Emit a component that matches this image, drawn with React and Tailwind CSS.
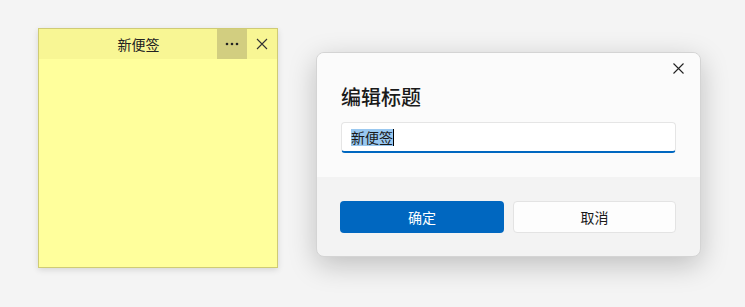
export default function App() {
  const font = { fontFamily: '"Noto Sans CJK SC", "Noto Sans", sans-serif' };
  return (
    <div className="w-[745px] h-[307px] bg-[#f4f4f4] flex items-start pl-[38px] pt-[28px] overflow-hidden" style={font}>
      <div className="w-[240px] h-[240px] border border-[#cfcb75] bg-[#ffff9c] flex flex-col shadow-[0_2px_6px_rgba(0,0,0,0.12)]">
        <div className="h-[30px] bg-[#f8f694] flex items-stretch">
          <div className="flex-1 flex items-center justify-center pl-[21px] text-[14px] text-[#222]">新便签</div>
          <div className="w-[30px] bg-[#d2ce80] flex items-center justify-center">
            <svg width="14" height="4" viewBox="0 0 14 4"><circle cx="2" cy="2" r="1.3" fill="#222"/><circle cx="7" cy="2" r="1.3" fill="#222"/><circle cx="12" cy="2" r="1.3" fill="#222"/></svg>
          </div>
          <div className="w-[30px] flex items-center justify-center">
            <svg width="12" height="12" viewBox="0 0 12 12"><path d="M1 1L11 11M11 1L1 11" stroke="#333" strokeWidth="1.1"/></svg>
          </div>
        </div>
      </div>
      <div className="ml-[38px] mt-[24px] w-[385px] h-[205px] rounded-[8px] border border-[#d4d4d4] bg-[#f3f3f3] overflow-hidden flex flex-col shadow-[0_8px_28px_rgba(0,0,0,0.22)]">
        <div className="bg-[#fbfbfb] h-[124px] flex flex-col px-[24px] relative">
          <div className="absolute right-[14px] top-[7px] w-[16px] h-[16px] flex items-center justify-center">
            <svg width="11" height="11" viewBox="0 0 11 11"><path d="M0.5 0.5L10.5 10.5M10.5 0.5L0.5 10.5" stroke="#222" strokeWidth="1.1"/></svg>
          </div>
          <div className="mt-[32px] text-[20px] font-medium leading-[24px] text-[#1a1a1a]">编辑标题</div>
          <div className="mt-[13px] h-[31px] w-[335px] rounded-[4px] bg-white border border-[#e5e5e5] border-b-2 border-b-[#0067c0] flex items-center pl-[9px]">
            <span className="text-[14px] leading-[17px] text-[#1a1a1a] bg-[#99c8f0]">新便签</span>
            <span className="w-px h-[17px] bg-black"></span>
          </div>
        </div>
        <div className="flex gap-[9px] px-[23px] pt-[24px]">
          <button className="w-[164px] h-[32px] rounded-[4px] bg-[#0067c0] text-white text-[14px]">确定</button>
          <button className="w-[163px] h-[32px] rounded-[4px] bg-[#fdfdfd] border border-[#e3e3e3] text-[#1a1a1a] text-[14px]">取消</button>
        </div>
      </div>
    </div>
  );
}
